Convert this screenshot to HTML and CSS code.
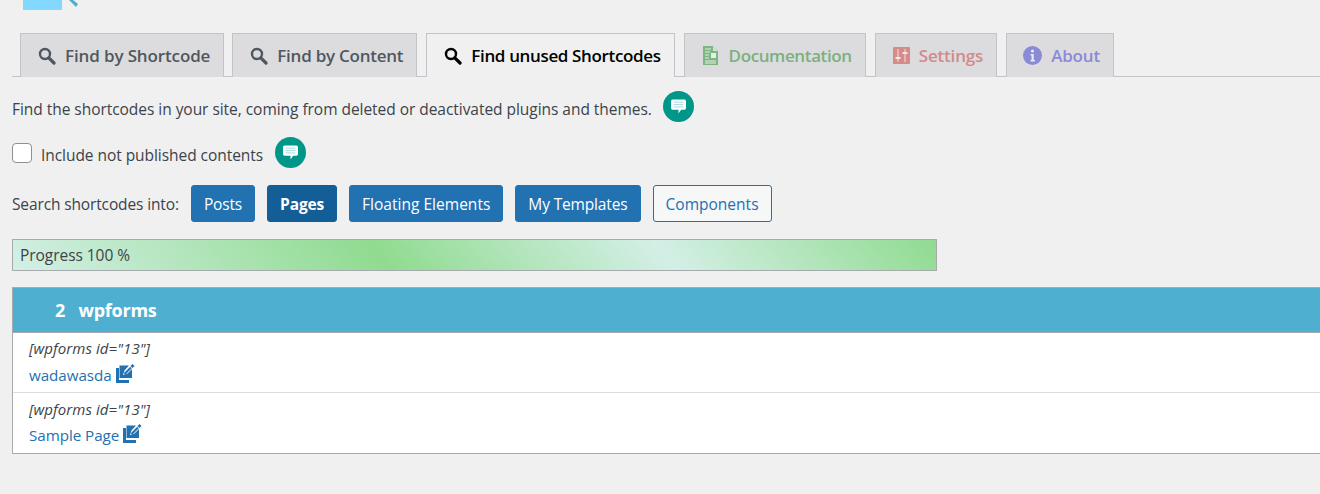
FILE: index.html
```html
<!DOCTYPE html>
<html lang="en">
<head>
<meta charset="utf-8">
<title>Find unused Shortcodes</title>
<link rel="stylesheet" href="styles.css">
</head>
<body>
<svg class="icon-defs" width="0" height="0" aria-hidden="true">
  <defs>
    <symbol id="search" viewBox="0 0 18 18"><circle cx="7" cy="7" r="5" fill="none" stroke="currentColor" stroke-width="2.4"/><path d="M10.800 10.800 16 16" stroke="currentColor" stroke-width="3.200" stroke-linecap="round"/></symbol>
    <symbol id="bubble" viewBox="0 0 14 14"><path d="M1.500 .5h11A1.500 1.500 0 0 1 14 2v6.500A1.500 1.500 0 0 1 12.500 10H9.500L7 13.500V10H1.500A1.500 1.500 0 0 1 0 8.500V2A1.500 1.500 0 0 1 1.500 .5z" fill="#fff"/><path d="M2.500 3h9M2.500 5.200h9M2.500 7.400h9" stroke="#a5dce0" stroke-width=".9"/></symbol>
    <symbol id="edit" viewBox="0 0 20 20"><path d="M0 4h3v12h10v3H0z" fill="currentColor"/><path d="M3.500 1.500H13L8.500 6.500 7 11l4.500-1.500 4.500-4.500v9H3.500z" fill="currentColor"/><path d="M8.500 10 15 3.500" stroke="currentColor" stroke-width="2.200"/><path d="M15.500 3 17.500 1" stroke="currentColor" stroke-width="2.800"/></symbol>
  </defs>
</svg>
<div class="logo">
  <span class="logo-bar"></span>
  <svg class="logo-pencil" width="10" height="7" viewBox="0 0 10 7"><path d="M1 0h4l5 4-2 3z" fill="#4eaecf"/></svg>
</div>
<nav class="tabs">
  <a class="tab tab-first"><svg class="tab-icon" width="18" height="18"><use href="#search"/></svg>Find by Shortcode</a>
  <a class="tab tab-second"><svg class="tab-icon" width="18" height="18"><use href="#search"/></svg>Find by Content</a>
  <a class="tab tab-active"><svg class="tab-icon" width="18" height="18"><use href="#search"/></svg>Find unused Shortcodes</a>
  <a class="tab tab-green"><svg class="tab-icon" width="15" height="19" viewBox="0 0 15 19"><path d="M0 0h10l5 5v14H0z" fill="#7db583"/><path d="M10 0v5h5" fill="#cfe3cf"/><path d="M2 3h6M2 6h5M2 9h4M2 12h4M2 15h11M2 17h11" stroke="#e6efe6" stroke-width="1.200"/><path d="M8 7h5v5H8z" fill="#e6efe6"/></svg>Documentation</a>
  <a class="tab tab-red"><svg class="tab-icon" width="17" height="17" viewBox="0 0 17 17"><rect width="17" height="17" rx="1" fill="#d68b8b"/><path d="M5 2v13M12 2v13" stroke="#ecc4c4" stroke-width="1.500"/><path d="M2.500 10h5v2h-5zM9.500 5h5v2h-5z" fill="#f5e8e8"/></svg>Settings</a>
  <a class="tab tab-blue"><svg class="tab-icon" width="19" height="19" viewBox="0 0 19 19"><circle cx="9.500" cy="9.500" r="9.500" fill="#8a8ad6"/><circle cx="9.500" cy="5" r="1.600" fill="#e8e8f5"/><path d="M7.500 8h3.300v6h1.200v1.500H7.500V14h1v-4.500h-1z" fill="#e8e8f5"/></svg>About</a>
</nav>
<p class="intro">Find the shortcodes in your site, coming from deleted or deactivated plugins and themes.<span class="help"><svg width="15" height="15"><use href="#bubble"/></svg></span></p>
<div class="include">
  <input class="check" type="checkbox" id="inc"><label for="inc">Include not published contents</label>
  <span class="help help-inc"><svg width="15" height="15"><use href="#bubble"/></svg></span>
</div>
<div class="search-row">
  <span class="search-label">Search shortcodes into:</span>
  <a class="btn btn-tight">Posts</a>
  <a class="btn btn-current">Pages</a>
  <a class="btn">Floating Elements</a>
  <a class="btn btn-tight">My Templates</a>
  <a class="btn btn-outline">Components</a>
</div>
<div class="progress">Progress 100 %</div>
<section class="result">
  <h2 class="result-head"><span class="count">2</span>wpforms</h2>
  <div class="item">
    <div class="code">[wpforms id="13"]</div>
    <a class="page-link">wadawasda<svg class="edit" width="20" height="20"><use href="#edit"/></svg></a>
  </div>
  <div class="item">
    <div class="code">[wpforms id="13"]</div>
    <a class="page-link">Sample Page<svg class="edit" width="20" height="20"><use href="#edit"/></svg></a>
  </div>
</section>
</body>
</html>
```
FILE: styles.css
```css
* { box-sizing: border-box; }
html, body { margin: 0; height: 494px; overflow: hidden; }
body {
  background: #f0f0f1;
  color: #3c434a;
  font-family: "Open Sans", "Noto Sans", sans-serif;
  font-size: 15.5px;
  padding-left: 12px;
}
.icon-defs { position: absolute; }
.logo { display: flex; height: 33px; padding-left: 11px; align-items: flex-start; gap: 6px; }
.logo-bar { width: 39px; height: 10px; background: #83d8ff; }
.logo-pencil { display: block; }
.tabs { display: flex; height: 44px; padding-left: 8px; border-bottom: 1px solid #c3c4c7; }
.tab {
  display: flex; align-items: center; height: 44px;
  padding: 0 13px 0 17px;
  margin-right: 9px;
  border: 1px solid #c3c4c7;
  border-bottom: 0;
  background: #dcdcde;
  color: #50575e;
  font-size: 17px;
  font-weight: 600;
  letter-spacing: -.18px;
}
.tab-first { margin-right: 8px; letter-spacing: -.13px; }
.tab-second { letter-spacing: -.24px; }
.tab-icon { margin-right: 9px; flex: none; }
.tab-active { background: #f0f0f1; color: #000; letter-spacing: -.36px; }
.tab-green { color: #79b17f; padding-left: 18px; letter-spacing: -.38px; }
.tab-green .tab-icon { margin-right: 11px; }
.tab-red { color: #d28a8a; }
.tab-blue { color: #8a8ad6; margin-right: 0; padding-left: 16px; }
.intro { display: flex; align-items: center; margin: 16px 0 0; height: 32px; letter-spacing: -.04px; }
.help {
  display: inline-flex; align-items: center; justify-content: center;
  width: 31px; height: 31px; border-radius: 50%;
  background: #009688; margin-left: 11px; margin-top: -6px;
}
.include { display: flex; align-items: center; height: 32px; margin-top: 12px; letter-spacing: -.05px; }
.check {
  appearance: none; width: 20px; height: 20px; margin: 0 9px 0 0;
  background: #fff; border: 1px solid #8c8f94; border-radius: 4px;
}
.include label { padding-top: 3px; }
.help-inc { margin-left: 12px; margin-top: -2px; }
.search-row { display: flex; align-items: center; height: 37px; margin-top: 16px; }
.search-label { letter-spacing: -.13px; margin-right: 12px; }
.btn {
  display: flex; align-items: center; height: 37px; padding: 0 12px;
  margin-right: 12px; border-radius: 3px; border: 1px solid #2271b1;
  background: #2271b1; color: #fff; letter-spacing: .02px;
}
.btn-tight { letter-spacing: -.15px; }
.btn-current { background: #135e96; border-color: #135e96; font-weight: 700; letter-spacing: -.15px; }
.btn-outline { background: #f6f7f7; color: #2271b1; }
.progress {
  width: 925px; height: 32px; margin-top: 17px; padding-left: 7px;
  display: flex; align-items: center;
  border: 1px solid #a7aaad;
  background: linear-gradient(50deg, #d4efe6 0, #90db90 40%, #d4efe6 70%, #90db90 100%);
  letter-spacing: -.05px;
}
.result { margin-top: 16px; border: 1px solid #a7aaad; border-right: 0; background: #fff; }
.result-head {
  display: flex; align-items: center; height: 45px; margin: 0; padding-left: 42px;
  background: #4fafd0; color: #fff; font-size: 18px; font-weight: 700; letter-spacing: -.25px;
  border-bottom: 1px solid #a7aaad;
}
.count { margin-right: 13.5px; }
.item { height: 59px; padding: 4px 16px 0; }
.item + .item { border-top: 1px solid #dcdcde; height: 61px; padding-top: 5px; }
.code { font-style: italic; font-size: 15px; height: 25px; line-height: 22px; letter-spacing: .08px; }
.item + .item .code { height: 24px; }
.page-link { display: flex; align-items: center; color: #2271b1; font-size: 15.2px; letter-spacing: -.05px; line-height: 26px; }
.edit { margin-left: 4px; margin-top: -2px; }
```
